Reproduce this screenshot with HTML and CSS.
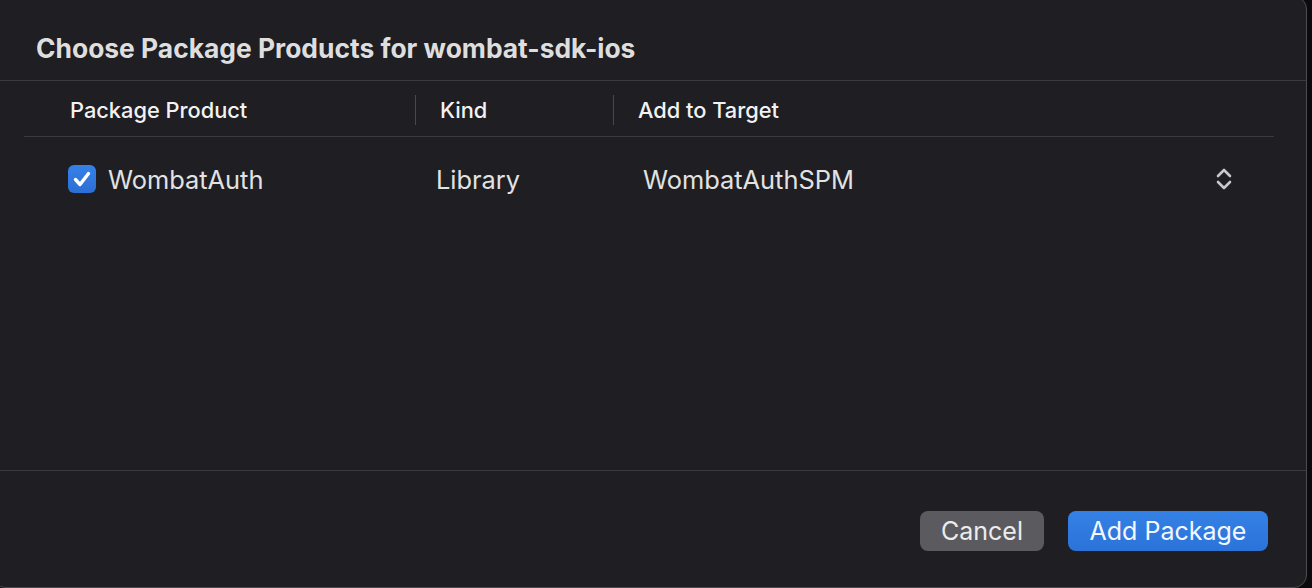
FILE: index.html
```html
<!DOCTYPE html>
<html>
<head>
<meta charset="utf-8">
<link rel="stylesheet" href="styles.css">
</head>
<body>
<div class="window">
  <header class="title-bar"><h1 class="title">Choose Package Products for wombat-sdk-ios</h1></header>
  <section class="table">
    <div class="thead">
      <div class="th col-product"><span>Package Product</span></div>
      <div class="th col-kind sep"><span>Kind</span></div>
      <div class="th col-target sep"><span>Add to Target</span></div>
    </div>
    <div class="tbody">
      <div class="tr">
        <div class="td col-product">
          <span class="checkbox">
            <svg viewBox="0 0 28 28" width="28" height="28"><path d="M7.5 14.5 L12 19.5 L20.5 8.5" fill="none" stroke="#fff" stroke-width="3.4" stroke-linecap="round" stroke-linejoin="round"/></svg>
          </span>
          <span class="cell-text">WombatAuth</span>
        </div>
        <div class="td col-kind"><span class="cell-text kind-text">Library</span></div>
        <div class="td col-target">
          <span class="cell-text target-text">WombatAuthSPM</span>
          <svg class="stepper" viewBox="0 0 16 22" width="16" height="22"><path d="M2 8 L8 2 L14 8 M2 14 L8 20 L14 14" fill="none" stroke="#c9c9cc" stroke-width="2.6" stroke-linecap="round" stroke-linejoin="round"/></svg>
        </div>
      </div>
    </div>
  </section>
  <footer class="footer">
    <button class="btn btn-cancel">Cancel</button>
    <button class="btn btn-primary">Add Package</button>
  </footer>
</div>
</body>
</html>
```
FILE: styles.css
```css
* { box-sizing: border-box; }
html, body { margin: 0; padding: 0; }
body {
  background: #0b0b0d;
  width: 1312px;
  height: 588px;
  overflow: hidden;
  font-family: Inter, "Noto Sans", sans-serif;
}
.window {
  margin: -4px 0 0 -8px;
  width: 1315px;
  height: 592px;
  background: #1e1e23;
  border: 1px solid #4c4c51;
  border-radius: 13px;
  display: flex;
  flex-direction: column;
  overflow: hidden;
}
.title-bar {
  height: 84px;
  padding: 19px 0 0 43px;
  border-bottom: 1px solid #3a3a3f;
  display: flex;
  align-items: center;
  flex: none;
}
.title {
  margin: 0;
  font-size: 26.4px;
  font-weight: 700;
  color: #dedede;
}
.table {
  flex: 1;
  margin: 0 32px 0 31px;
  display: flex;
  flex-direction: column;
}
.thead {
  height: 56px;
  padding-top: 2px;
  border-bottom: 1px solid #3a3a3f;
  display: flex;
  align-items: center;
  flex: none;
}
.th {
  height: 30px;
  display: flex;
  align-items: center;
  font-size: 21.8px;
  font-weight: 500;
  color: #f2f2f2;
}
.sep { border-left: 1px solid #48484d; padding-left: 24px; }
.col-product { width: 391px; }
.th.col-product { padding-left: 46px; }
.col-kind { width: 198px; }
.col-target { flex: 1; }
.tr {
  height: 84px;
  display: flex;
  align-items: center;
}
.td {
  display: flex;
  align-items: center;
  font-size: 25.4px;
  color: #e2e2e2;
}
.td.col-product { padding-left: 44px; }
.checkbox {
  width: 28px;
  height: 28px;
  border-radius: 6px;
  background: linear-gradient(#3581e8, #2c6fd6);
  display: flex;
  margin-right: 12px;
}
.kind-text { margin-left: 21px; }
.target-text { margin-left: 30px; }
.stepper { margin-left: auto; margin-right: 42px; }
.footer {
  height: 117px;
  border-top: 1px solid #3a3a3f;
  display: flex;
  justify-content: flex-end;
  align-items: flex-start;
  padding: 40px 38px 0 0;
  gap: 24px;
  flex: none;
}
.btn {
  height: 40px;
  border: none;
  border-radius: 8px;
  font-family: Inter, "Noto Sans", sans-serif;
  font-size: 25px;
  color: #ececec;
  display: flex;
  align-items: center;
  justify-content: center;
  padding: 0;
}
.btn-cancel { width: 124px; background: #5b5a5f; }
.btn-primary { width: 200px; background: linear-gradient(#3481e6, #2b73d8); color: #f4f7ff; }
```
